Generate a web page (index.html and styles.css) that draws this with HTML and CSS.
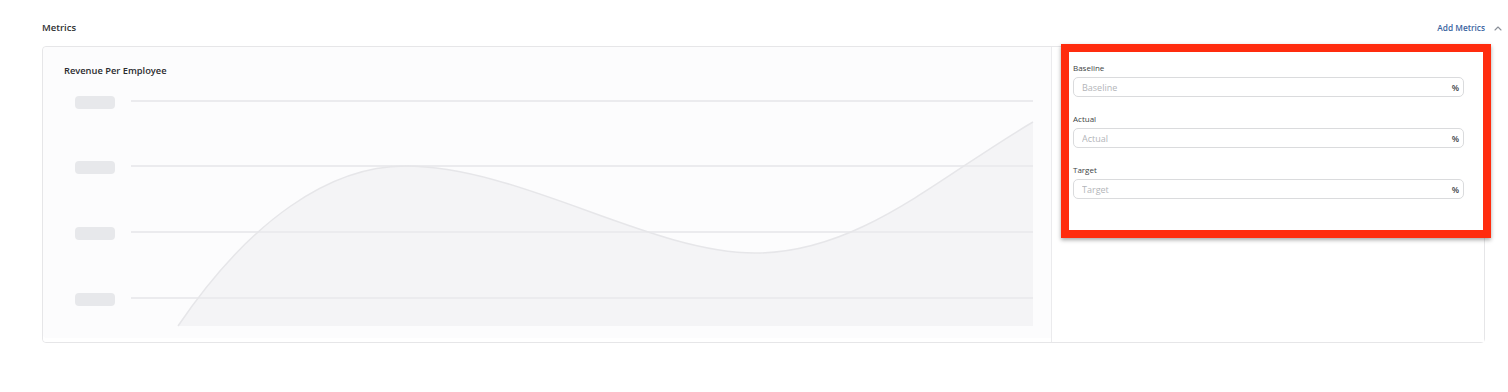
FILE: index.html
```html
<!DOCTYPE html>
<html lang="en">
<head>
<meta charset="utf-8">
<title>Metrics</title>
<link rel="stylesheet" href="styles.css">
</head>
<body>
<div class="page">
  <div class="header">
    <div class="title">Metrics</div>
    <div class="actions">
      <span class="add-link">Add Metrics</span>
      <svg class="chevron" width="8" height="5" viewBox="0 0 8 5"><path d="M1 4 L4 1 L7 4" fill="none" stroke="#8a8f98" stroke-width="1.1" stroke-linecap="round" stroke-linejoin="round"/></svg>
    </div>
  </div>
  <div class="card">
    <div class="chart-panel">
      <div class="chart-title">Revenue Per Employee</div>
      <svg class="chart" viewBox="0 0 1008 256" width="1008" height="256">
        <path d="M135 242 C207 136 287 82 362 82 C477 82 607 169 712 169 C817 169 897 92 990 38 L990 242 Z" fill="#f4f4f6"/>
        <g stroke="#ebebee" stroke-width="2">
          <line x1="88" y1="17" x2="990" y2="17"/>
          <line x1="88" y1="82" x2="990" y2="82"/>
          <line x1="88" y1="148" x2="990" y2="148"/>
          <line x1="88" y1="214" x2="990" y2="214"/>
        </g>
        <g fill="#e7e8eb">
          <rect x="32" y="12" width="40" height="13" rx="4"/>
          <rect x="32" y="77" width="40" height="13" rx="4"/>
          <rect x="32" y="143" width="40" height="13" rx="4"/>
          <rect x="32" y="209" width="40" height="13" rx="4"/>
        </g>
        <path d="M135 242 C207 136 287 82 362 82 C477 82 607 169 712 169 C817 169 897 92 990 38" fill="none" stroke="#e6e6e9" stroke-width="1.5"/>
      </svg>
    </div>
    <div class="form-panel">
      <div class="highlight"></div>
      <div class="field">
        <label class="field-label">Baseline</label>
        <div class="input-wrap"><input class="input" placeholder="Baseline"><span class="suffix">%</span></div>
      </div>
      <div class="field">
        <label class="field-label">Actual</label>
        <div class="input-wrap"><input class="input" placeholder="Actual"><span class="suffix">%</span></div>
      </div>
      <div class="field">
        <label class="field-label">Target</label>
        <div class="input-wrap"><input class="input" placeholder="Target"><span class="suffix">%</span></div>
      </div>
    </div>
  </div>
</div>
</body>
</html>
```

FILE: styles.css
```css
* { box-sizing: border-box; }
html, body { margin: 0; padding: 0; background: #ffffff; }
body { font-family: "Open Sans", "Liberation Sans", sans-serif; color: #333; }

.page {
  padding: 21px 23px 0 42px;
}

.header {
  display: flex;
  justify-content: space-between;
  align-items: center;
  height: 14px;
  margin-bottom: 11px;
}
.title {
  font-size: 9.5px;
  font-weight: 600;
  color: #2f3033;
  line-height: 14px;
}
.actions {
  display: flex;
  align-items: center;
  gap: 9px;
  margin-right: -17px;
}
.add-link {
  font-size: 8.3px;
  font-weight: 600;
  color: #3a64a0;
  line-height: 14px;
}
.chevron { display: block; }

.card {
  display: grid;
  grid-template-columns: 1008px 433px;
  width: 1443px;
  height: 297px;
  border: 1px solid #e6e6e8;
  border-radius: 4px;
}

.chart-panel {
  background: #fcfcfd;
  border-radius: 4px 0 0 4px;
  padding-top: 17px;
  box-shadow: inset 0 -4px 0 #ffffff;
}
.chart-title {
  font-size: 9.3px;
  font-weight: 600;
  color: #2a2b2e;
  line-height: 14px;
  padding-left: 21px;
}
.chart {
  display: block;
  margin-top: 6px;
}

.form-panel {
  position: relative;
  border-left: 1px solid #ebebed;
  background: #fff;
  padding: 15px 20px 0 21px;
}
.highlight {
  position: absolute;
  left: 9px;
  top: -3px;
  width: 430px;
  height: 194px;
  border: 8px solid #ff2c0e;
  box-shadow: 0 2px 4px rgba(0, 0, 0, 0.35);
  pointer-events: none;
}

.field {
  display: flex;
  flex-direction: column;
  gap: 4px;
  margin-bottom: 16px;
}
.field-label {
  font-size: 8px;
  line-height: 11px;
  color: #3d3f44;
}
.input-wrap {
  display: flex;
  align-items: center;
  height: 20px;
  border: 1px solid #dadbdd;
  border-radius: 5px;
  padding: 0 4px 0 8px;
}
.input {
  flex: 1;
  min-width: 0;
  border: none;
  outline: none;
  background: transparent;
  font-family: "Open Sans", "Liberation Sans", sans-serif;
  font-size: 9px;
  color: #333;
  padding: 0;
}
.input::placeholder { color: #b3b5b9; }
.suffix {
  font-size: 8.5px;
  font-weight: 600;
  color: #44464b;
}
```
